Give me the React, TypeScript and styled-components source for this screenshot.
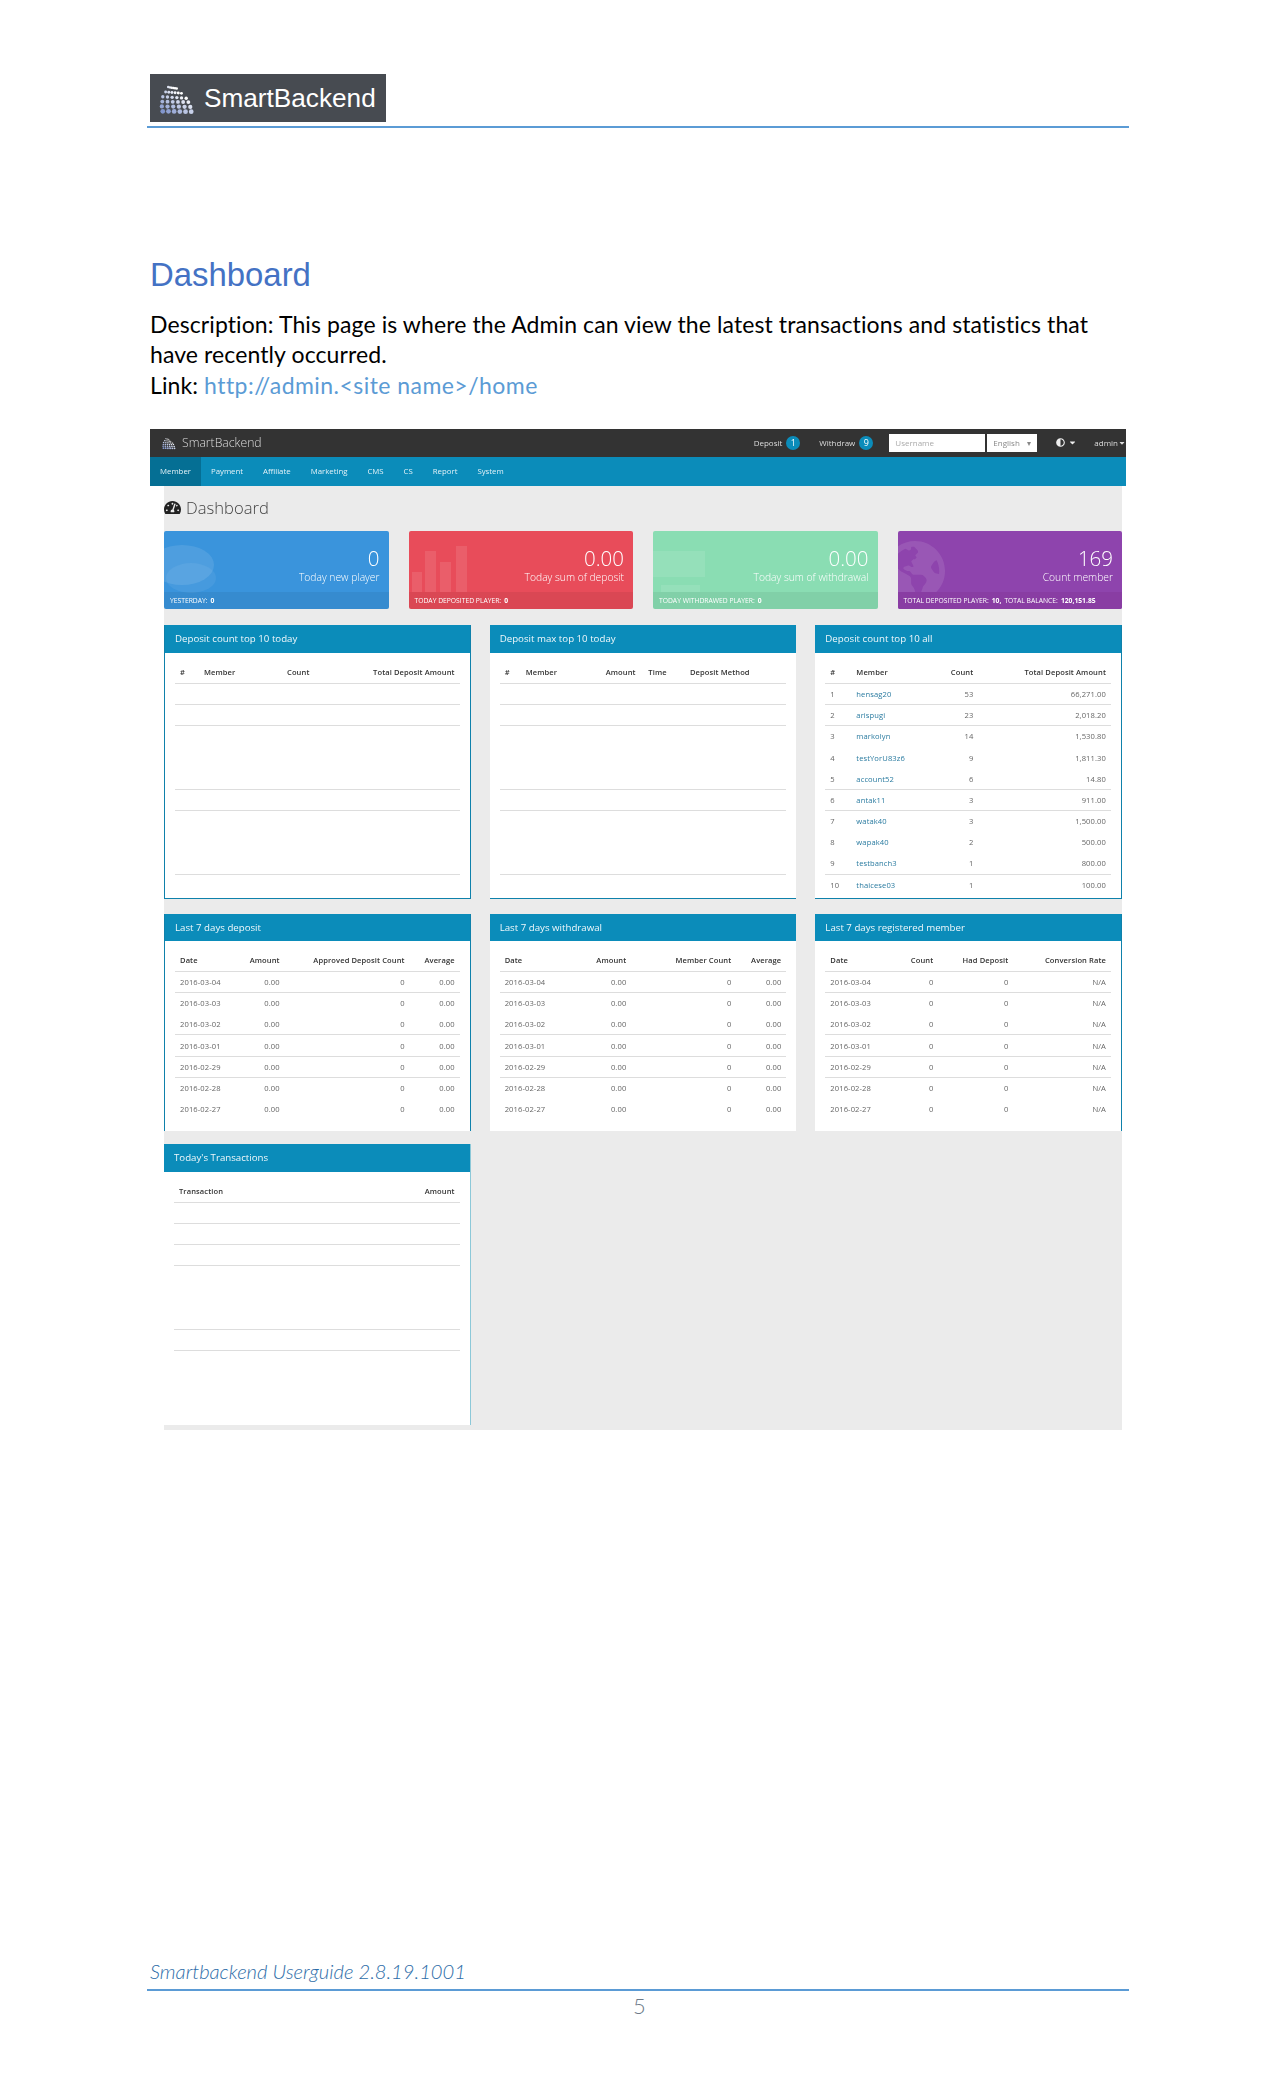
import styled, { createGlobalStyle } from "styled-components";
import { FaTachometerAlt, FaGlobeAmericas, FaAdjust, FaCaretDown } from "react-icons/fa";

const GlobalStyle = createGlobalStyle`
    html, body {
        margin: 0;
        padding: 0;
        background: #fff;
    }
`;

const Page = styled.div`
    box-sizing: border-box;
    display: flex;
    flex-direction: column;
    height: 2100px;
    padding: 74px 146px 0 150px;
    width: 1275px;
    font-family: "Lato", "Liberation Sans", sans-serif;
`;

const LogoBox = styled.div`
    align-items: center;
    background: #474b51;
    box-sizing: border-box;
    color: #fff;
    display: flex;
    font-family: "Liberation Sans", sans-serif;
    font-size: 26.2px;
    gap: 9px;
    height: 48px;
    padding-left: 9px;
    width: 236px;
`;

const Rule = styled.div`
    background: #5b9bd5;
    height: 2px;
    margin-left: -3px;
`;

const HeaderRule = styled(Rule)`
    margin-top: 4px;
`;

const Heading = styled.h1`
    color: #4472c4;
    font-family: "Liberation Sans", sans-serif;
    font-size: 32.9px;
    font-weight: 400;
    line-height: 40px;
    margin: 127px 0 14px;
`;

const Description = styled.div`
    color: #000;
    font-size: 23px;
    letter-spacing: 0.1px;
    line-height: 30.3px;
    margin-bottom: 29px;
`;

const DocLink = styled.span`
    color: #5b9bd5;
    letter-spacing: 0.45px;
`;

const Shot = styled.div`
    display: flex;
    filter: blur(0.35px);
    flex-direction: column;
    font-family: "Open Sans", sans-serif;
    width: 976px;
`;

const TopBar = styled.div`
    align-items: center;
    background: #333;
    color: #ddd;
    display: flex;
    font-size: 8px;
    height: 28px;
    justify-content: space-between;
    padding: 0 0 0 12px;
`;

const Brand = styled.div`
    align-items: center;
    display: flex;
    font-size: 12.2px;
    font-weight: 300;
    gap: 6px;
`;

const TopTools = styled.div`
    align-items: center;
    display: flex;
`;

const TopLink = styled.div<{ $gap: number }>`
    align-items: center;
    display: flex;
    gap: 4px;
    margin-right: ${(props) => props.$gap}px;
`;

const AdminCaret = styled(FaCaretDown)`
    margin-left: -4px;
`;

const Badge = styled.span`
    align-items: center;
    background: #0b8cba;
    border-radius: 50%;
    color: #fff;
    display: flex;
    font-size: 9px;
    height: 14px;
    justify-content: center;
    width: 14px;
`;

const SearchBox = styled.div`
    align-items: center;
    background: #fff;
    box-sizing: border-box;
    color: #aaa;
    display: flex;
    height: 18px;
    margin-right: 2px;
    padding-left: 6px;
    width: 96px;
`;

const LangSelect = styled.div`
    align-items: center;
    background: #fff;
    box-sizing: border-box;
    color: #888;
    display: flex;
    height: 18px;
    justify-content: space-between;
    margin-right: 19px;
    padding: 0 6px;
    width: 50px;
`;

const ToolIcon = styled.div<{ $gap: number }>`
    align-items: center;
    color: #eee;
    display: flex;
    font-size: 9px;
    gap: 3px;
    margin-right: ${(props) => props.$gap}px;
`;

const NavBar = styled.div`
    align-items: stretch;
    background: #0b8cba;
    color: #e3f2f8;
    display: flex;
    font-size: 7.8px;
    height: 29px;
`;

const NavItem = styled.div<{ $active?: boolean }>`
    align-items: center;
    background: ${(props) => (props.$active ? "#056f94" : "transparent")};
    display: flex;
    padding: 0 10px;
`;

const Canvas = styled.div`
    background: #ebebeb;
    display: flex;
    flex-direction: column;
    margin-left: 14px;
    padding-bottom: 5px;
    width: 958px;
`;

const TitleRow = styled.div`
    align-items: center;
    box-sizing: border-box;
    color: #444;
    display: flex;
    font-size: 16.6px;
    font-weight: 300;
    gap: 5px;
    height: 45px;
    padding-bottom: 2px;
`;

const TitleIcon = styled.span`
    color: #222;
    display: flex;
    font-size: 17px;
`;

const StatGrid = styled.div`
    display: grid;
    gap: 20px;
    grid-template-columns: repeat(4, 1fr);
`;

const StatCard = styled.div<{ $bg: string }>`
    background: ${(props) => props.$bg};
    border-radius: 2px;
    color: #fff;
    display: flex;
    flex-direction: column;
    height: 78px;
    overflow: hidden;
    position: relative;
`;

const StatArt = styled.div<{ $left?: number; $top?: number }>`
    color: rgba(255, 255, 255, 0.1);
    display: flex;
    left: ${(props) => props.$left || 0}px;
    position: absolute;
    top: ${(props) => props.$top || 0}px;
`;

const StatBody = styled.div`
    align-items: flex-end;
    display: flex;
    flex: 1;
    flex-direction: column;
    font-weight: 300;
    padding: 15px 9px 0 0;
`;

const StatValue = styled.div`
    font-size: 20.5px;
    line-height: 24px;
`;

const StatLabel = styled.div`
    font-size: 10.3px;
    line-height: 15px;
`;

const StatFoot = styled.div<{ $tint?: string }>`
    align-items: center;
    background: ${(props) => props.$tint || "rgba(0, 0, 0, 0.06)"};
    display: flex;
    font-size: 6.75px;
    gap: 3px;
    height: 17px;
    padding-left: 6px;
    position: relative;
    text-transform: uppercase;
`;

const PanelRow = styled.div<{ $top: number; $height: number }>`
    display: grid;
    gap: 19px;
    grid-template-columns: repeat(3, 1fr);
    height: ${(props) => props.$height}px;
    margin-top: ${(props) => props.$top}px;
`;

const Panel = styled.div<{ $edges: string; $edgeColor?: string }>`
    background: #fff;
    box-sizing: border-box;
    display: flex;
    flex-direction: column;
    ${(props) => props.$edges.includes("l") && `border-left: 1px solid ${props.$edgeColor || "#0f81ab"};`}
    ${(props) => props.$edges.includes("r") && `border-right: 1px solid ${props.$edgeColor || "#0f81ab"};`}
    ${(props) => props.$edges.includes("b") && `border-bottom: 1px solid ${props.$edgeColor || "#0f81ab"};`}
`;

const PanelTitle = styled.div<{ $height: number }>`
    align-items: center;
    background: #0b8cba;
    color: #f0f8fb;
    display: flex;
    flex-shrink: 0;
    font-size: 9.7px;
    height: ${(props) => props.$height}px;
    padding-left: 10px;
`;

const TableWrap = styled.div`
    display: flex;
    flex-direction: column;
    padding: 0 10px;
`;

const Row = styled.div<{ $cols: string; $head?: boolean; $line?: boolean }>`
    align-items: center;
    border-bottom: 1px solid ${(props) => (props.$line ? "#ddd" : "transparent")};
    box-sizing: border-box;
    color: ${(props) => (props.$head ? "#333" : "#666")};
    display: grid;
    font-size: ${(props) => (props.$head ? "7.55px" : "7.6px")};
    font-weight: ${(props) => (props.$head ? 600 : 400)};
    grid-template-columns: ${(props) => props.$cols};
    height: ${(props) => (props.$head ? "31px" : "21.2px")};
    letter-spacing: 0.1px;
    padding: ${(props) => (props.$head ? "9px 5px 0" : "0 5px")};
    white-space: nowrap;
`;

const Cell = styled.div<{ $right?: boolean; $link?: boolean }>`
    color: ${(props) => (props.$link ? "#2a7ba0" : "inherit")};
    text-align: ${(props) => (props.$right ? "right" : "left")};
`;

const Footer = styled.div`
    display: flex;
    flex-direction: column;
    margin-top: auto;
    padding-bottom: 82px;
`;

const FooterText = styled.div`
    color: #2e6da8;
    font-size: 20.2px;
    font-style: italic;
    font-weight: 300;
    line-height: 26px;
    margin-bottom: 5px;
`;

const PageNumber = styled.div`
    color: #6d7a88;
    font-size: 22px;
    font-weight: 300;
    line-height: 24px;
    margin-top: 3px;
    padding-left: 483px;
`;

// left and right ends of each dot row, bottom row first
const logoLeft = [4, 3, 3.5, 4, 7, 9.7];
const logoRight = [34, 33, 31, 28.7, 23.7, 18.7];

// dot grid: blue on the lower left, white on the upper right
const LogoMark = ({ size }: { size: number }) => {
    const dots = [];
    for (let r = 0; r < 6; r++) {
        for (let c = 0; c < 6; c++) {
            const x = logoLeft[r] + (c / 5) * (logoRight[r] - logoLeft[r]);
            const y = 32 - r * 5.1 + (c / 5) * (r < 3 ? 0.5 : 1.5);
            const rad = 2.5 - r * 0.24;
            const mix = Math.min(1, (c + r * 1.3) / 9);
            const fill = `rgb(${Math.round(130 + 125 * mix)}, ${Math.round(150 + 105 * mix)}, ${Math.round(205 + 50 * mix)})`;
            dots.push(<circle key={`${r}-${c}`} cx={x} cy={y} r={rad} fill={fill} />);
        }
    }
    return (
        <svg width={size} height={size} viewBox="0 0 38 36">
            {dots}
        </svg>
    );
};

const BubbleArt = () => (
    <svg width="70" height="62" viewBox="0 0 70 62">
        <ellipse cx="18" cy="34" rx="32" ry="20" fill="currentColor" />
        <ellipse cx="27" cy="47" rx="25" ry="15" fill="currentColor" opacity="0.6" />
    </svg>
);

const BarsArt = () => (
    <svg width="70" height="61" viewBox="0 0 70 61">
        <rect x="3" y="41" width="10" height="20" fill="currentColor" />
        <rect x="16" y="20" width="11" height="41" fill="currentColor" />
        <rect x="31" y="31" width="11" height="30" fill="currentColor" />
        <rect x="47" y="15" width="11" height="46" fill="currentColor" />
    </svg>
);

const NotesArt = () => (
    <svg width="70" height="61" viewBox="0 0 70 61">
        <rect x="0" y="20" width="52" height="26" fill="currentColor" />
        <rect x="8" y="54" width="39" height="7" fill="currentColor" />
    </svg>
);

const navItems = ["Member", "Payment", "Affiliate", "Marketing", "CMS", "CS", "Report", "System"];

const topTenCols = "24px 83px 60px 1fr";
const topAllCols = "26px 60px 57px 1fr";
const maxCols = "21px 62px 48px 31px 83px";
const weekDepositCols = "1fr 50px 125px 50px";
const weekWithdrawCols = "1fr 50px 105px 50px";
const weekMemberCols = "76px 27px 75px 1fr";

const topRows = [
    ["1", "hensag20", "53", "66,271.00"],
    ["2", "arispugi", "23", "2,018.20"],
    ["3", "markolyn", "14", "1,530.80"],
    ["4", "testYorU83z6", "9", "1,811.30"],
    ["5", "account52", "6", "14.80"],
    ["6", "antak11", "3", "911.00"],
    ["7", "watak40", "3", "1,500.00"],
    ["8", "wapak40", "2", "500.00"],
    ["9", "testbanch3", "1", "800.00"],
    ["10", "thaicese03", "1", "100.00"],
];

const weekDates = ["2016-03-04", "2016-03-03", "2016-03-02", "2016-03-01", "2016-02-29", "2016-02-28", "2016-02-27"];

const topLines = [0, 1, 4, 5, 8];
const weekLines = [0, 2, 3, 4];
const todayLines = [0, 1, 2, 5, 6];

const EmptyRows = ({ count, lines, cols }: { count: number; lines: number[]; cols: string }) => (
    <>
        {Array.from({ length: count }).map((_, i) => (
            <Row key={i} $cols={cols} $line={lines.includes(i)} />
        ))}
    </>
);

const WeekRows = ({ cols, last }: { cols: string; last: string }) => (
    <>
        {weekDates.map((date, i) => (
            <Row key={date} $cols={cols} $line={weekLines.includes(i)}>
                <Cell>{date}</Cell>
                <Cell $right>{last === "N/A" ? "0" : "0.00"}</Cell>
                <Cell $right>0</Cell>
                <Cell $right>{last}</Cell>
            </Row>
        ))}
    </>
);

export default function App() {
    return (
        <Page>
            <GlobalStyle />
            <LogoBox>
                <LogoMark size={36} />
                <span>SmartBackend</span>
            </LogoBox>
            <HeaderRule />
            <Heading>Dashboard</Heading>
            <Description>
                Description: This page is where the Admin can view the latest transactions and statistics that
                <br />
                have recently occurred.
                <br />
                Link: <DocLink>{"http://admin.<site name>/home"}</DocLink>
            </Description>

            <Shot>
                <TopBar>
                    <Brand>
                        <LogoMark size={14} />
                        <span>SmartBackend</span>
                    </Brand>
                    <TopTools>
                        <TopLink $gap={19}>
                            Deposit <Badge>1</Badge>
                        </TopLink>
                        <TopLink $gap={16}>
                            Withdraw <Badge>9</Badge>
                        </TopLink>
                        <SearchBox>Username</SearchBox>
                        <LangSelect>
                            English <span>▾</span>
                        </LangSelect>
                        <ToolIcon $gap={17}>
                            <FaAdjust />
                            <FaCaretDown />
                        </ToolIcon>
                        <TopLink $gap={0}>
                            admin <AdminCaret />
                        </TopLink>
                    </TopTools>
                </TopBar>
                <NavBar>
                    {navItems.map((item, i) => (
                        <NavItem key={item} $active={i === 0}>
                            {item}
                        </NavItem>
                    ))}
                </NavBar>
                <Canvas>
                    <TitleRow>
                        <TitleIcon>
                            <FaTachometerAlt />
                        </TitleIcon>
                        <span>Dashboard</span>
                    </TitleRow>
                    <StatGrid>
                        <StatCard $bg="#3a94dc">
                            <StatArt>
                                <BubbleArt />
                            </StatArt>
                            <StatBody>
                                <StatValue>0</StatValue>
                                <StatLabel>Today new player</StatLabel>
                            </StatBody>
                            <StatFoot>
                                Yesterday: <b>0</b>
                            </StatFoot>
                        </StatCard>
                        <StatCard $bg="#e84c5a">
                            <StatArt>
                                <BarsArt />
                            </StatArt>
                            <StatBody>
                                <StatValue>0.00</StatValue>
                                <StatLabel>Today sum of deposit</StatLabel>
                            </StatBody>
                            <StatFoot>
                                Today deposited player: <b>0</b>
                            </StatFoot>
                        </StatCard>
                        <StatCard $bg="#8addb3">
                            <StatArt>
                                <NotesArt />
                            </StatArt>
                            <StatBody>
                                <StatValue>0.00</StatValue>
                                <StatLabel>Today sum of withdrawal</StatLabel>
                            </StatBody>
                            <StatFoot>
                                Today withdrawed player: <b>0</b>
                            </StatFoot>
                        </StatCard>
                        <StatCard $bg="#8e44ad">
                            <StatArt $left={-14} $top={9}>
                                <FaGlobeAmericas size={62} />
                            </StatArt>
                            <StatBody>
                                <StatValue>169</StatValue>
                                <StatLabel>Count member</StatLabel>
                            </StatBody>
                            <StatFoot $tint="#893da3">
                                Total deposited player: <b>10,</b> Total balance: <b>120,151.85</b>
                            </StatFoot>
                        </StatCard>
                    </StatGrid>

                    <PanelRow $top={16} $height={274}>
                        <Panel $edges="lrb">
                            <PanelTitle $height={28}>Deposit count top 10 today</PanelTitle>
                            <TableWrap>
                                <Row $cols={topTenCols} $head $line>
                                    <Cell>#</Cell>
                                    <Cell>Member</Cell>
                                    <Cell>Count</Cell>
                                    <Cell $right>Total Deposit Amount</Cell>
                                </Row>
                                <EmptyRows count={10} lines={topLines} cols={topTenCols} />
                            </TableWrap>
                        </Panel>
                        <Panel $edges="b">
                            <PanelTitle $height={28}>Deposit max top 10 today</PanelTitle>
                            <TableWrap>
                                <Row $cols={maxCols} $head $line>
                                    <Cell>#</Cell>
                                    <Cell>Member</Cell>
                                    <Cell $right>Amount</Cell>
                                    <Cell $right>Time</Cell>
                                    <Cell $right>Deposit Method</Cell>
                                </Row>
                                <EmptyRows count={10} lines={topLines} cols={maxCols} />
                            </TableWrap>
                        </Panel>
                        <Panel $edges="rb">
                            <PanelTitle $height={28}>Deposit count top 10 all</PanelTitle>
                            <TableWrap>
                                <Row $cols={topAllCols} $head $line>
                                    <Cell>#</Cell>
                                    <Cell>Member</Cell>
                                    <Cell $right>Count</Cell>
                                    <Cell $right>Total Deposit Amount</Cell>
                                </Row>
                                {topRows.map((row, i) => (
                                    <Row key={row[0]} $cols={topAllCols} $line={topLines.includes(i)}>
                                        <Cell>{row[0]}</Cell>
                                        <Cell $link>{row[1]}</Cell>
                                        <Cell $right>{row[2]}</Cell>
                                        <Cell $right>{row[3]}</Cell>
                                    </Row>
                                ))}
                            </TableWrap>
                        </Panel>
                    </PanelRow>

                    <PanelRow $top={15} $height={217}>
                        <Panel $edges="lr">
                            <PanelTitle $height={27}>Last 7 days deposit</PanelTitle>
                            <TableWrap>
                                <Row $cols={weekDepositCols} $head $line>
                                    <Cell>Date</Cell>
                                    <Cell $right>Amount</Cell>
                                    <Cell $right>Approved Deposit Count</Cell>
                                    <Cell $right>Average</Cell>
                                </Row>
                                <WeekRows cols={weekDepositCols} last="0.00" />
                            </TableWrap>
                        </Panel>
                        <Panel $edges="">
                            <PanelTitle $height={27}>Last 7 days withdrawal</PanelTitle>
                            <TableWrap>
                                <Row $cols={weekWithdrawCols} $head $line>
                                    <Cell>Date</Cell>
                                    <Cell $right>Amount</Cell>
                                    <Cell $right>Member Count</Cell>
                                    <Cell $right>Average</Cell>
                                </Row>
                                <WeekRows cols={weekWithdrawCols} last="0.00" />
                            </TableWrap>
                        </Panel>
                        <Panel $edges="r">
                            <PanelTitle $height={27}>Last 7 days registered member</PanelTitle>
                            <TableWrap>
                                <Row $cols={weekMemberCols} $head $line>
                                    <Cell>Date</Cell>
                                    <Cell $right>Count</Cell>
                                    <Cell $right>Had Deposit</Cell>
                                    <Cell $right>Conversion Rate</Cell>
                                </Row>
                                <WeekRows cols={weekMemberCols} last="N/A" />
                            </TableWrap>
                        </Panel>
                    </PanelRow>

                    <PanelRow $top={13} $height={281}>
                        <Panel $edges="r" $edgeColor="#8cc8d8">
                            <PanelTitle $height={28}>Today's Transactions</PanelTitle>
                            <TableWrap>
                                <Row $cols="1fr 1fr" $head $line>
                                    <Cell>Transaction</Cell>
                                    <Cell $right>Amount</Cell>
                                </Row>
                                <EmptyRows count={7} lines={todayLines} cols="1fr 1fr" />
                            </TableWrap>
                        </Panel>
                    </PanelRow>
                </Canvas>
            </Shot>

            <Footer>
                <FooterText>Smartbackend Userguide 2.8.19.1001</FooterText>
                <Rule />
                <PageNumber>5</PageNumber>
            </Footer>
        </Page>
    );
}
